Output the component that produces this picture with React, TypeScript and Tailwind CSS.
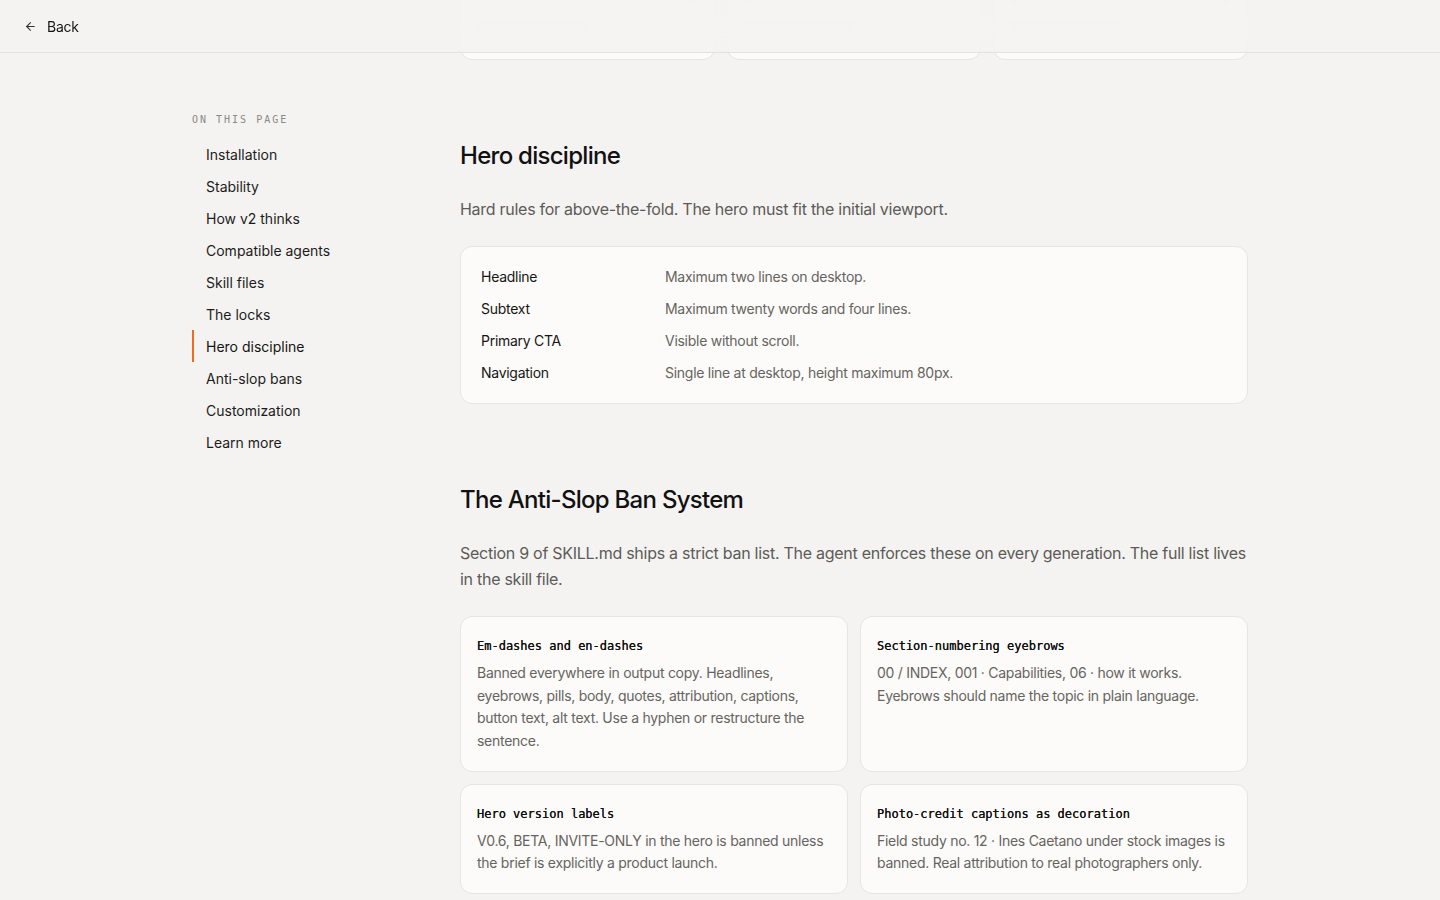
import React from "react";

const toc = [
  "Installation",
  "Stability",
  "How v2 thinks",
  "Compatible agents",
  "Skill files",
  "The locks",
  "Hero discipline",
  "Anti-slop bans",
  "Customization",
  "Learn more",
];

const rules = [
  ["Headline", "Maximum two lines on desktop."],
  ["Subtext", "Maximum twenty words and four lines."],
  ["Primary CTA", "Visible without scroll."],
  ["Navigation", "Single line at desktop, height maximum 80px."],
];

const bans = [
  {
    t: "Em-dashes and en-dashes",
    d: "Banned everywhere in output copy. Headlines, eyebrows, pills, body, quotes, attribution, captions, button text, alt text. Use a hyphen or restructure the sentence.",
  },
  {
    t: "Section-numbering eyebrows",
    d: "00 / INDEX, 001 · Capabilities, 06 · how it works. Eyebrows should name the topic in plain language.",
  },
  {
    t: "Hero version labels",
    d: "V0.6, BETA, INVITE-ONLY in the hero is banned unless the brief is explicitly a product launch.",
  },
  {
    t: "Photo-credit captions as decoration",
    d: "Field study no. 12 · Ines Caetano under stock images is banned. Real attribution to real photographers only.",
  },
];

const sans = { fontFamily: "Inter, 'Noto Sans', sans-serif" } as const;
const mono = { fontFamily: "'DejaVu Sans Mono', 'Liberation Mono', monospace" } as const;

export default function App() {
  return (
    <div className="min-h-screen bg-[#f4f3f1] text-[#141414] overflow-hidden tracking-[-0.017em]" style={sans}>
      <header className="fixed top-0 left-0 right-0 z-10 h-[53px] border-b border-[#e4e2de] bg-[#f4f3f1]/80 backdrop-blur-xl flex items-center px-6">
        <button className="flex items-center gap-[10px] text-[14px] text-[#141414]">
          <svg width="13" height="13" viewBox="0 0 24 24" fill="none" stroke="#333" strokeWidth="2" strokeLinecap="round" strokeLinejoin="round">
            <path d="M19 12H5" />
            <path d="M12 19l-7-7 7-7" />
          </svg>
          Back
        </button>
      </header>

      <div className="max-w-[1056px] mx-auto grid grid-cols-[220px_1fr] gap-12">
        <aside className="pt-[112px]">
          <div className="h-4 leading-4 text-[10px] tracking-[0.2em] text-[#8a8985] mb-[10px]" style={mono}>
            ON THIS PAGE
          </div>
          <nav className="flex flex-col tracking-normal">
            {toc.map((item) => (
              <a
                key={item}
                className={
                  item === "Hero discipline"
                    ? "h-8 flex items-center pl-3 border-l-2 border-[#f46a1c] text-[14px] text-[#141414]"
                    : "h-8 flex items-center pl-3 border-l-2 border-transparent text-[14px] text-[#1c1c1c]"
                }
              >
                {item}
              </a>
            ))}
          </nav>
        </aside>

        <main className="-mt-[140px] pb-20">
          <div className="grid grid-cols-3 gap-3">
            {[0, 1, 2].map((i) => (
              <div key={i} className="h-[200px] rounded-xl border border-[#e7e5e1] bg-[#fcfbf9] p-4 flex flex-col gap-3">
                <div className="h-[130px] rounded-lg bg-[#f1f0ec] flex items-center justify-center">
                  <div className="w-2/3 h-10 rounded-full bg-[#e9e7e2]" />
                </div>
                <div className="h-3 w-1/2 rounded bg-[#eeece8]" />
              </div>
            ))}
          </div>

          <section className="mt-20">
            <h2 className="text-[24px] leading-8 font-medium tracking-[-0.03em] text-[#111]">Hero discipline</h2>
            <p className="mt-6 text-[16px] leading-[26px] text-[#5c5b58]">
              Hard rules for above-the-fold. The hero must fit the initial viewport.
            </p>
            <div className="mt-6 rounded-xl border border-[#e7e5e1] bg-[#fcfbf9] px-5 py-[18px] flex flex-col gap-2">
              {rules.map(([k, v]) => (
                <div key={k} className="grid grid-cols-[184px_1fr] text-[14px] leading-6">
                  <span className="text-[#161616]">{k}</span>
                  <span className="text-[#66645f]">{v}</span>
                </div>
              ))}
            </div>
          </section>

          <section className="mt-20">
            <h2 className="text-[24px] leading-8 font-medium tracking-[-0.03em] text-[#111]">The Anti-Slop Ban System</h2>
            <p className="mt-6 text-[16px] leading-[26px] text-[#5c5b58]">
              Section 9 of SKILL.md ships a strict ban list. The agent enforces these on every generation. The full list lives in the skill file.
            </p>
            <div className="mt-6 grid grid-cols-2 gap-3">
              {bans.map((b) => (
                <div key={b.t} className="rounded-xl border border-[#e7e5e1] bg-[#fcfbf9] px-4 pt-5 pb-[18px]">
                  <div className="text-[12px] leading-[18px] font-normal tracking-normal text-[#111] [text-shadow:0_0_0.5px_#111]" style={mono}>
                    {b.t}
                  </div>
                  <p className="mt-[7px] text-[14px] leading-[22.67px] text-[#66645f]">{b.d}</p>
                </div>
              ))}
            </div>
          </section>
        </main>
      </div>
    </div>
  );
}
